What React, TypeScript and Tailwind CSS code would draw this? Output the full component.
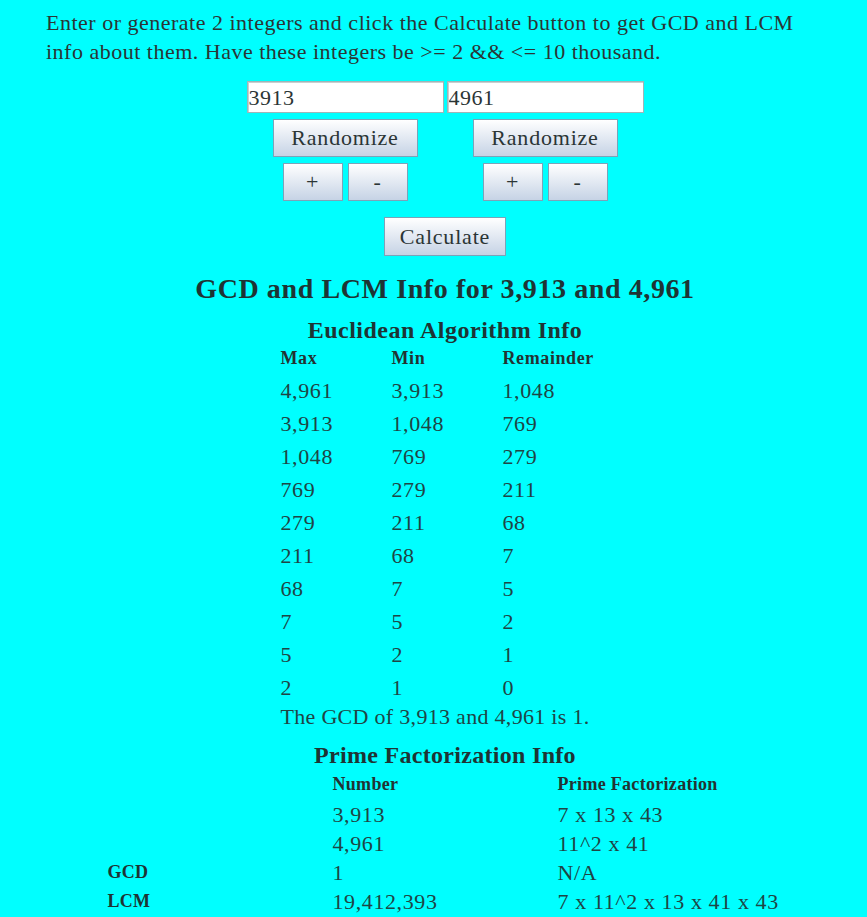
import { useState } from "react";

const FONT = { fontFamily: '"Liberation Serif", "Times New Roman", serif' };

const euclid = [
  ["4,961", "3,913", "1,048"],
  ["3,913", "1,048", "769"],
  ["1,048", "769", "279"],
  ["769", "279", "211"],
  ["279", "211", "68"],
  ["211", "68", "7"],
  ["68", "7", "5"],
  ["7", "5", "2"],
  ["5", "2", "1"],
  ["2", "1", "0"],
];

const primes = [
  ["", "3,913", "7 x 13 x 43"],
  ["", "4,961", "11^2 x 41"],
  ["GCD", "1", "N/A"],
  ["LCM", "19,412,393", "7 x 11^2 x 13 x 41 x 43"],
];

const btn =
  "border border-[#7ba3b8] bg-linear-to-b from-white to-[#c6d3e5] text-[22px] leading-none tracking-[0.8px] text-[#2b3535]";

function NumberPicker({ value, onChange }: { value: string; onChange: (v: string) => void }) {
  return (
    <div className="flex flex-col items-center">
      <input
        value={value}
        onChange={(e) => onChange(e.target.value)}
        className="h-[32px] w-[197px] border border-[#9fb5b8] bg-white px-[1px] text-[22px] tracking-[0.5px] text-[#2b3535] outline-none shadow-[inset_1px_1px_0_#c8d0d0]"
      />
      <button className={`${btn} mt-[6px] h-[38px] w-[145px]`}>Randomize</button>
      <div className="mt-[6px] flex gap-[5px]">
        <button className={`${btn} h-[38px] w-[60px]`}>+</button>
        <button className={`${btn} h-[38px] w-[60px]`}>-</button>
      </div>
    </div>
  );
}

export default function App() {
  const [a, setA] = useState("3913");
  const [b, setB] = useState("4961");

  return (
    <div className="min-h-screen bg-[#00ffff] text-[#223333]" style={FONT}>
      <div className="ml-[46px] w-[798px] pt-[8px]">
        <p className="w-[765px] text-[22px] leading-[29px] tracking-[0.5px] text-[#2b3535]">
          Enter or generate 2 integers and click the Calculate button to get GCD and LCM info about
          them. Have these integers be &gt;= 2 &amp;&amp; &lt;= 10 thousand.
        </p>

        <div className="mt-[15px] flex justify-center gap-[3px]">
          <NumberPicker value={a} onChange={setA} />
          <NumberPicker value={b} onChange={setB} />
        </div>

        <div className="mt-[16px] flex justify-center">
          <button className={`${btn} h-[39px] w-[122px]`}>Calculate</button>
        </div>

        <h2 className="mt-[15px] text-center text-[28px] font-bold leading-[36px] tracking-[0.6px] text-[#1e3434]">
          GCD and LCM Info for 3,913 and 4,961
        </h2>

        {/* Euclidean algorithm */}
        <h3 className="mt-[9px] text-center text-[24px] font-bold leading-[28px] tracking-[0.5px] text-[#1e3434]">
          Euclidean Algorithm Info
        </h3>
        <div className="mx-auto mt-[1px] w-[333px] pl-[2px]">
          <div className="grid h-[24px] grid-cols-[111px_111px_111px] items-center text-[18px] font-bold tracking-[0.6px]">
            <span>Max</span>
            <span>Min</span>
            <span>Remainder</span>
          </div>
          <div className="mt-[5px]">
            {euclid.map((r, i) => (
              <div
                key={i}
                className="grid h-[33px] grid-cols-[111px_111px_111px] items-center text-[22px] tracking-[0.6px] text-[#1f4545]"
              >
                {r.map((c, j) => (
                  <span key={j}>{c}</span>
                ))}
              </div>
            ))}
          </div>
          <p className="h-[25px] text-[22px] leading-[25px] tracking-[0.3px] text-[#1f4545]">
            The GCD of 3,913 and 4,961 is 1.
          </p>
        </div>

        {/* Prime factorization */}
        <h3 className="mt-[12px] text-center text-[24px] font-bold leading-[28px] tracking-[0.3px] text-[#1e3434]">
          Prime Factorization Info
        </h3>
        <div className="mx-auto mt-[2px] w-[675px]">
          <div className="grid h-[24px] grid-cols-[225px_225px_225px] items-center text-[18px] font-bold tracking-[0.3px]">
            <span />
            <span>Number</span>
            <span>Prime Factorization</span>
          </div>
          <div className="mt-[3px]">
            {primes.map((r, i) => (
              <div
                key={i}
                className="grid h-[29px] grid-cols-[225px_225px_225px] items-center text-[22px] tracking-[0.6px] text-[#1f4545]"
              >
                <span className="text-[18px] font-bold tracking-[0.3px] text-[#1e3434]">{r[0]}</span>
                <span>{r[1]}</span>
                <span>{r[2]}</span>
              </div>
            ))}
          </div>
        </div>
      </div>
    </div>
  );
}
